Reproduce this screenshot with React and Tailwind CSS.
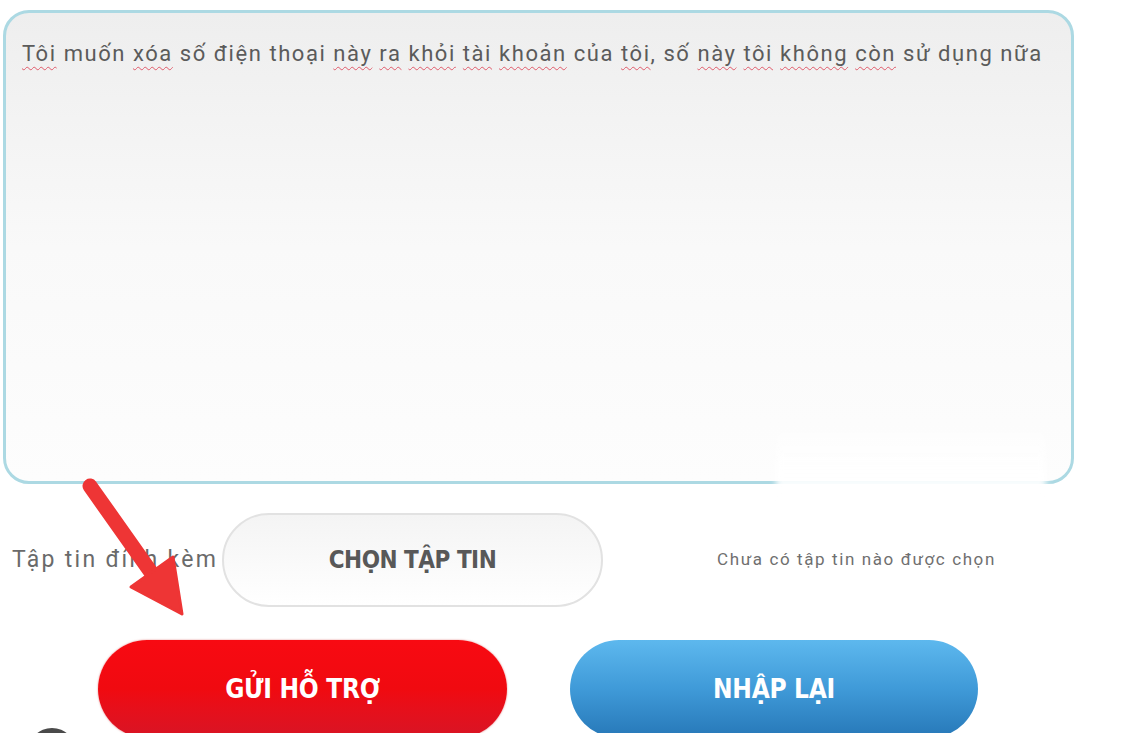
import React from "react";

const U = ({ children }) => (
  <span className="underline decoration-wavy decoration-[#e05a6a] decoration-1 underline-offset-[5px]">{children}</span>
);

export default function App() {
  return (
    <div className="relative w-[1134px] h-[733px] overflow-hidden bg-white font-['Roboto','Liberation_Sans',sans-serif]">
      {/* textarea */}
      <div className="ml-[3px] mt-[10px] w-[1071px] h-[474px] rounded-[26px] border-[3px] border-[#acd9e3] bg-gradient-to-b from-[#eeeeee] via-[#f9f9f9] to-[#fdfdfd] pl-[16px] pt-[24px]">
        <p className="text-[22px] text-[#5b5b5b] tracking-[1.55px] whitespace-nowrap">
          <U>Tôi</U> muốn <U>xóa</U> số điện thoại <U>này</U> <U>ra</U> <U>khỏi</U> <U>tài</U> <U>khoản</U> của <U>tôi</U>, số <U>này</U> <U>tôi</U> <U>không</U> <U>còn</U> sử dụng nữa
        </p>
      </div>

      {/* attachment row */}
      <div className="mt-[29px] flex items-center pl-[12px]">
        <span className="text-[23px] text-[#6a6a6a] w-[210px] tracking-[2.3px] whitespace-nowrap">Tập tin đính kèm</span>
        <button className="w-[381px] h-[94px] rounded-full border-2 border-[#e2e2e2] bg-gradient-to-b from-[#f4f4f4] to-white flex items-center justify-center">
          <span className="text-[24px] font-bold text-[#585858] font-['DejaVu_Sans','Liberation_Sans',sans-serif] font-stretch-condensed tracking-[-0.5px]">CHỌN TẬP TIN</span>
        </button>
        <span className="ml-[114px] text-[17px] text-[#6f6f6f] tracking-[1.6px] whitespace-nowrap">Chưa có tập tin nào được chọn</span>
      </div>

      {/* action buttons */}
      <div className="mt-[33px] flex pl-[98px] gap-[63px]">
        <button className="w-[409px] h-[98px] rounded-full bg-gradient-to-b from-[#f80a12] via-[#f00a10] to-[#d81424] flex items-center justify-center shadow-[0_0_2px_rgba(200,0,0,0.5)]">
          <span className="text-[26px] font-bold text-white font-['DejaVu_Sans','Liberation_Sans',sans-serif] font-stretch-condensed tracking-[-0.3px]">GỬI HỖ TRỢ</span>
        </button>
        <button className="w-[408px] h-[98px] rounded-full bg-gradient-to-b from-[#5db8ee] via-[#3f9ad8] to-[#2778b8] flex items-center justify-center">
          <span className="text-[26px] font-bold text-white font-['DejaVu_Sans','Liberation_Sans',sans-serif] font-stretch-condensed tracking-[-0.3px]">NHẬP LẠI</span>
        </button>
      </div>

      {/* white patch covering border */}
      <div className="absolute left-[776px] top-[420px] w-[270px] h-[82px] bg-gradient-to-b from-transparent via-white/80 to-white blur-[3px]" />

      {/* red arrow annotation */}
      <svg className="absolute left-0 top-0 pointer-events-none" width="1134" height="733">
        <line x1="90" y1="486" x2="160" y2="585" stroke="#ee3535" strokeWidth="15" strokeLinecap="round" />
        <polygon points="131,587 173,557 182,614" fill="#ee3535" stroke="#ee3535" strokeWidth="3" strokeLinejoin="round" />
        <circle cx="52" cy="752" r="24" fill="#4a4a4a" />
      </svg>
    </div>
  );
}
